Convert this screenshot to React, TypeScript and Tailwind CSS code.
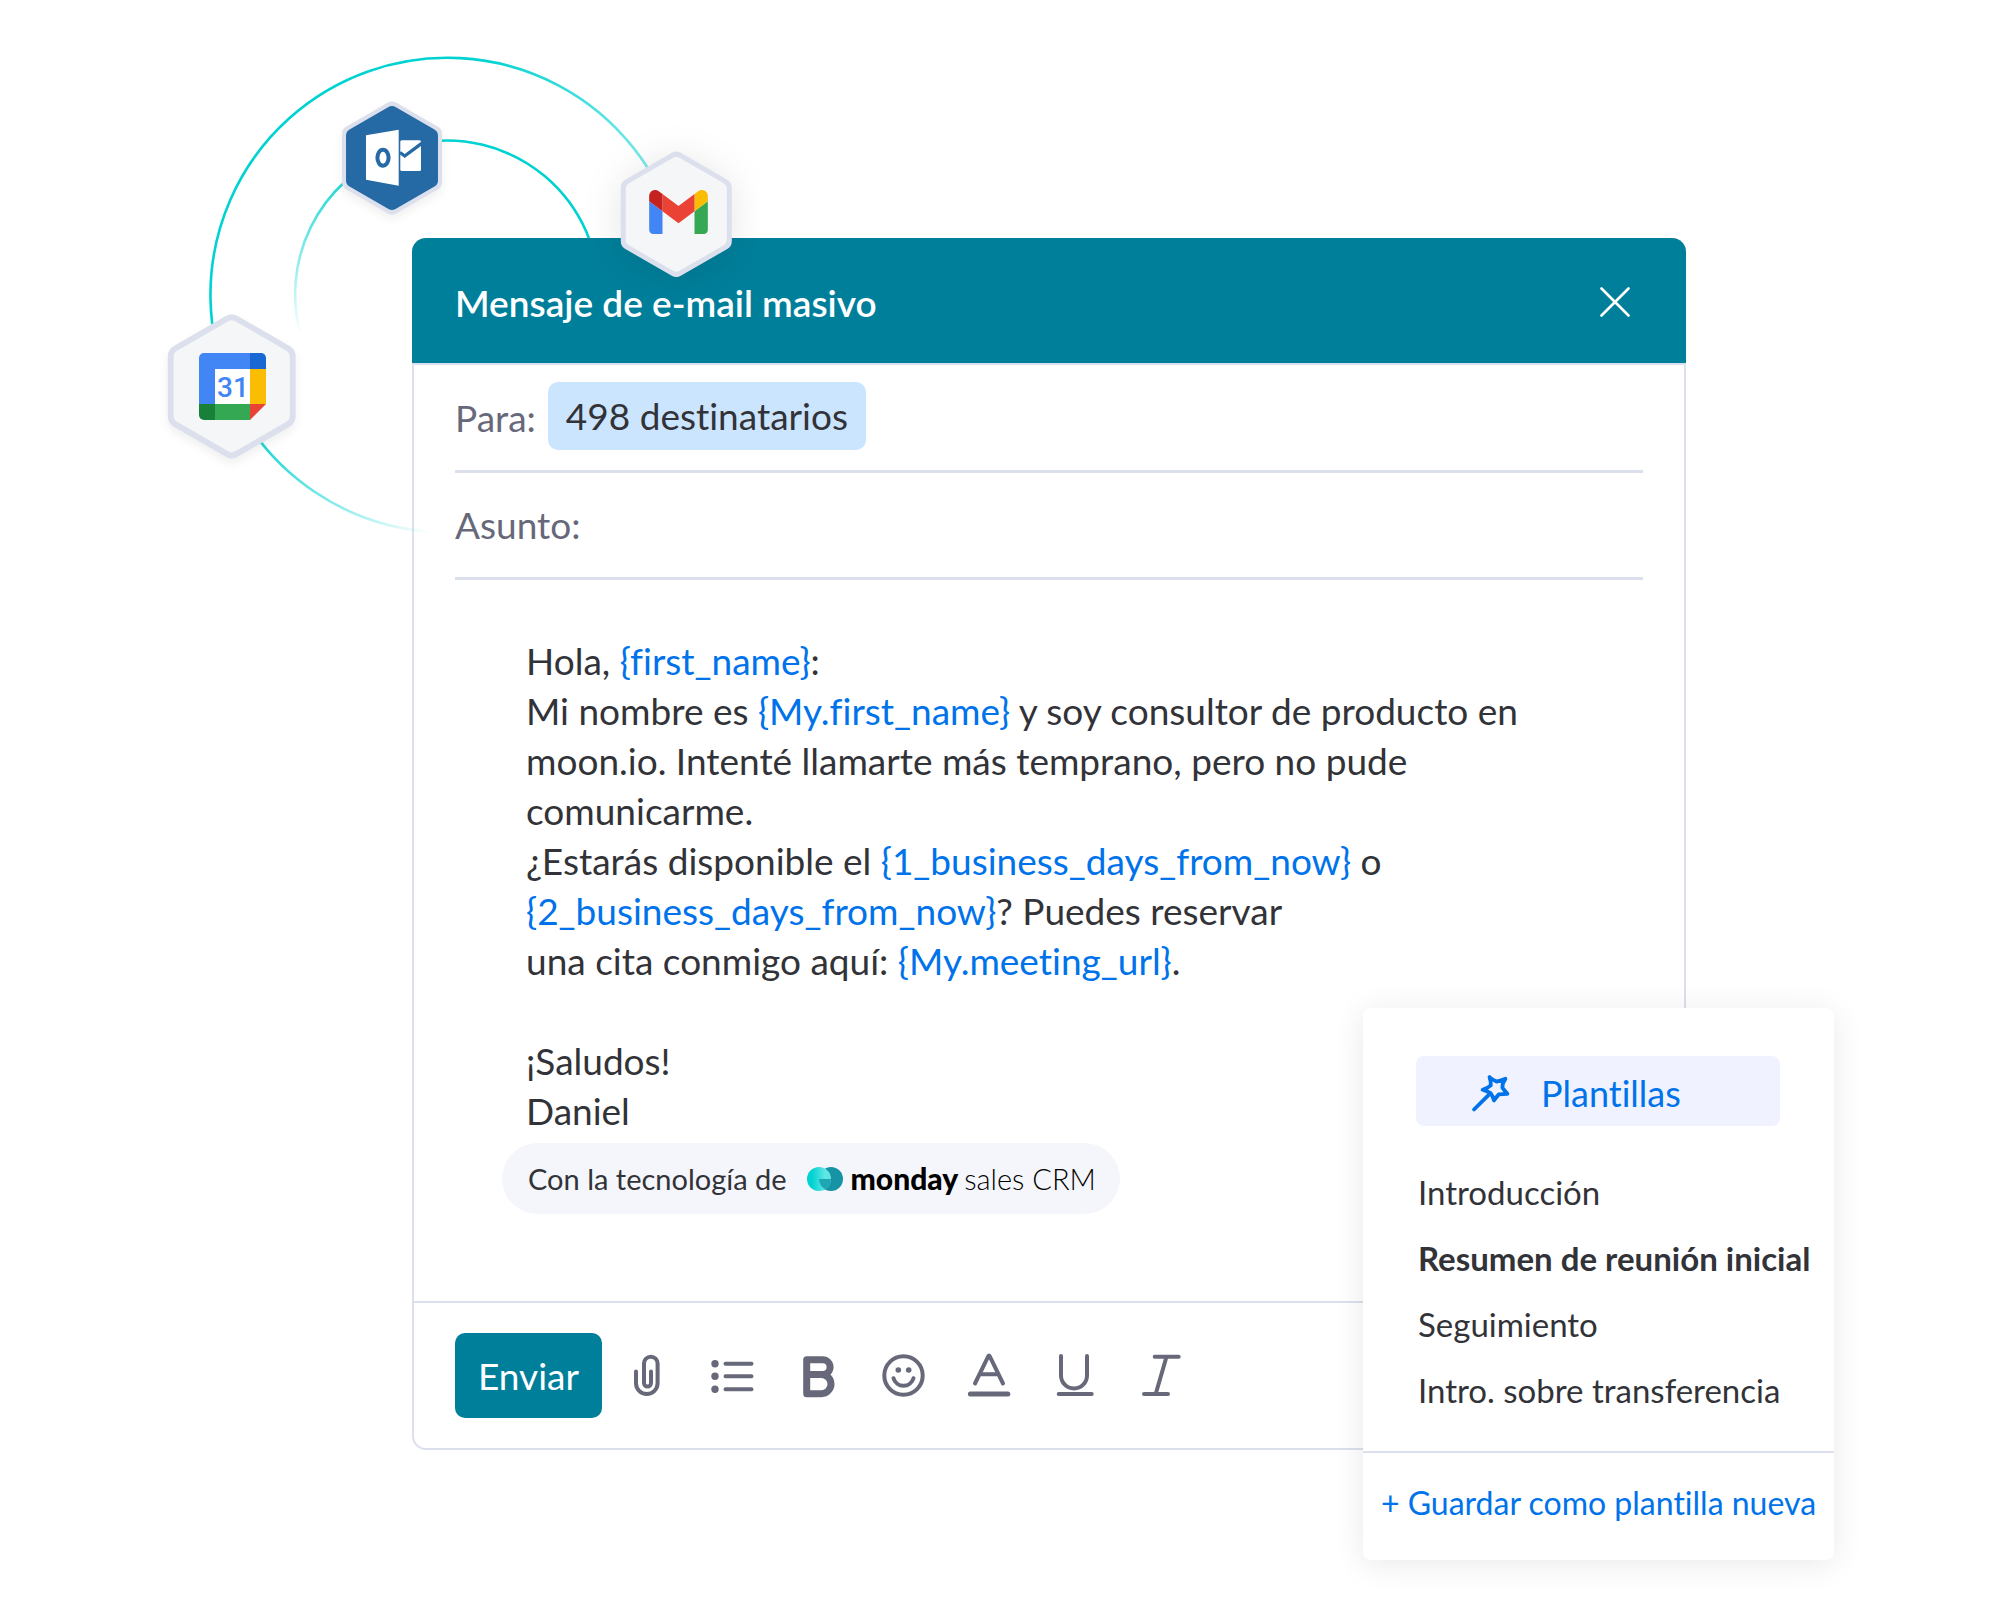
import React from "react";

const Token = ({ children }: { children: React.ReactNode }) => (
  <span className="text-[#0073ea]">{children}</span>
);

function hexPoints(cx: number, cy: number, r: number) {
  const w = r * 0.866;
  return [
    [cx, cy - r],
    [cx + w, cy - r / 2],
    [cx + w, cy + r / 2],
    [cx, cy + r],
    [cx - w, cy + r / 2],
    [cx - w, cy - r / 2],
  ]
    .map((p) => p.join(","))
    .join(" ");
}

type HexProps = {
  cx: number;
  cy: number;
  outer: [number, number];
  inner: [number, number];
  fill: string;
  shadow: string;
};

function Hexagon({ cx, cy, outer, inner, fill, shadow }: HexProps) {
  return (
    <g strokeLinejoin="round">
      <polygon
        className={shadow}
        points={hexPoints(cx, cy, outer[0])}
        fill="#dce0ed"
        stroke="#dce0ed"
        strokeWidth={outer[1] * 2}
      />
      <polygon points={hexPoints(cx, cy, inner[0])} fill={fill} stroke={fill} strokeWidth={inner[1] * 2} />
    </g>
  );
}

function OrbitLines() {
  return (
    <svg className="absolute top-0 left-0" width="760" height="560" viewBox="0 0 760 560" fill="none" aria-hidden="true">
      <defs>
        <linearGradient id="outerFade" gradientUnits="userSpaceOnUse" x1="480" y1="60" x2="670" y2="200">
          <stop offset="0" stopColor="#00d2d2" />
          <stop offset="1" stopColor="#00d2d2" stopOpacity="0.4" />
        </linearGradient>
        <linearGradient id="innerFade" gradientUnits="userSpaceOnUse" x1="0" y1="160" x2="0" y2="335">
          <stop offset="0" stopColor="#00d2d2" />
          <stop offset="1" stopColor="#00d2d2" stopOpacity="0" />
        </linearGradient>
      </defs>
      <path d="M230 389A237 237 0 1 1 676 232" stroke="url(#outerFade)" strokeWidth="2.6" />
      <path d="M301 336A152 152 0 0 1 391 153" stroke="url(#innerFade)" strokeWidth="2.6" />
      <path d="M420 143A152 152 0 0 1 599 293" stroke="#00d2d2" strokeWidth="2.6" />
    </svg>
  );
}

function IntegrationBadges() {
  return (
    <svg className="pointer-events-none absolute top-0 left-0" width="760" height="560" viewBox="0 0 760 560" fill="none" aria-hidden="true">
      <defs>
        <linearGradient id="tailFade" gradientUnits="userSpaceOnUse" x1="240" y1="430" x2="432" y2="530">
          <stop offset="0" stopColor="#00d2d2" />
          <stop offset="1" stopColor="#00d2d2" stopOpacity="0" />
        </linearGradient>
        <clipPath id="calClip">
          <path d="M204 353h57a5 5 0 0 1 5 5v46l-16 16h-46a5 5 0 0 1-5-5v-57a5 5 0 0 1 5-5z" />
        </clipPath>
      </defs>
      <path d="M232 395A237 237 0 0 0 436 532" stroke="url(#tailFade)" strokeWidth="2.6" />

      <Hexagon cx={392} cy={158} outer={[48.5, 8]} inner={[45, 7]} fill="#2569a5" shadow="drop-shadow-[0_5px_4px_rgba(0,0,0,0.06)]" />
      <polygon points="366,135.3 398.7,129.7 398.7,185.7 366,179.7" fill="#fff" />
      <ellipse cx="383" cy="157.7" rx="5.6" ry="8" stroke="#2569a5" strokeWidth="4" />
      <rect x="400.3" y="140.3" width="20.7" height="30.7" rx="1.5" fill="#fff" />
      <path d="M400 152.5l4.7 3.5 17-12.7" stroke="#2569a5" strokeWidth="3.4" />

      <Hexagon cx={676.3} cy={214.3} outer={[53.7, 9]} inner={[52, 5.5]} fill="#f5f6f8" shadow="drop-shadow-[0_4px_18px_rgba(0,0,0,0.1)]" />
      <svg x="649" y="190" width="59" height="44" viewBox="52 42 88 66">
        <path fill="#4285f4" d="M58 108h14V74L52 59v43c0 3.32 2.69 6 6 6" />
        <path fill="#34a853" d="M120 108h14c3.32 0 6-2.69 6-6V59l-20 15" />
        <path fill="#fbbc04" d="M120 48v26l20-15v-8c0-7.42-8.47-11.65-14.4-7.2" />
        <path fill="#ea4335" d="M72 74V48l24 18 24-18v26L96 92" />
        <path fill="#c5221f" d="M52 51v8l20 15V48l-5.6-4.2c-5.94-4.45-14.4-.22-14.4 7.2" />
      </svg>

      <Hexagon cx={231.7} cy={386.3} outer={[60, 12]} inner={[59, 7]} fill="#f5f6f8" shadow="drop-shadow-[0_5px_4px_rgba(0,0,0,0.06)]" />
      <g clipPath="url(#calClip)">
        <rect x="199" y="353" width="51" height="51" fill="#4285f4" />
        <rect x="250" y="353" width="16" height="16" fill="#1967d2" />
        <rect x="250" y="369" width="16" height="35" fill="#fbbc04" />
        <rect x="199" y="404" width="16" height="16" fill="#188038" />
        <rect x="215" y="404" width="35" height="16" fill="#34a853" />
        <rect x="250" y="404" width="16" height="16" fill="#ea4335" />
        <rect x="215" y="369" width="35" height="35" fill="#fff" />
      </g>
      <text x="233" y="397" textAnchor="middle" fontFamily="Roboto, sans-serif" fontSize="28" fontWeight="500" fill="#4285f4">
        31
      </text>
    </svg>
  );
}

const tools: { label: string; icon: React.ReactNode }[] = [
  {
    label: "Adjuntar",
    icon: <path d="M12 17.5V29.2a10.8 10.8 0 0 0 21.6 0V9.5a6.8 6.8 0 0 0-13.6 0V29a3.5 3.5 0 0 0 7 0V17.5" />,
  },
  {
    label: "Lista",
    icon: (
      <>
        <path d="M15.5 9.7h26M15.5 22.3h26M15.5 35.3h26" />
        <g fill="currentColor" stroke="none">
          <circle cx="5" cy="9.7" r="3.7" />
          <circle cx="5" cy="22.3" r="3.7" />
          <circle cx="5" cy="35.3" r="3.7" />
        </g>
      </>
    ),
  },
  {
    label: "Negrita",
    icon: (
      <path strokeWidth="7" d="M10.7 5.7h16a7.4 7.4 0 0 1 0 14.8h-16zM10.7 20.5h14.7a9.6 9.6 0 0 1 0 19.2H10.7z" />
    ),
  },
  {
    label: "Emoji",
    icon: (
      <>
        <circle cx="21.5" cy="21.5" r="19.2" />
        <path d="M11.5 24.2a10.4 10.4 0 0 0 20 0" />
        <g fill="currentColor" stroke="none">
          <circle cx="16.3" cy="16" r="2.8" />
          <circle cx="26.7" cy="16" r="2.8" />
        </g>
      </>
    ),
  },
  {
    label: "Color de texto",
    icon: (
      <>
        <path d="M7 29.5L20.2 2.4q.8-1.6 1.6 0L35 29.5M12 20.2h18" />
        <path strokeWidth="5" d="M2.4 40h37.4" />
      </>
    ),
  },
  {
    label: "Subrayado",
    icon: <path d="M7 2v19.5a13 13 0 0 0 26 0V2M4.7 40h33" />,
  },
  {
    label: "Cursiva",
    icon: <path d="M14.7 2.7h24M4 40h24M26.5 2.7L15.7 40" />,
  },
];

const templates = [
  { name: "Introducción", active: false },
  { name: "Resumen de reunión inicial", active: true },
  { name: "Seguimiento", active: false },
  { name: "Intro. sobre transferencia", active: false },
];

function MondayMark() {
  return (
    <svg width="36" height="24" viewBox="0 0 36 24" aria-hidden="true">
      <defs>
        <linearGradient id="markFade" x1="0" y1="0" x2="1" y2="0">
          <stop offset="0.2" stopColor="#00d2d2" />
          <stop offset="0.75" stopColor="#5fe6e4" />
        </linearGradient>
      </defs>
      <circle cx="24" cy="12" r="12" fill="#1793a6" />
      <circle cx="12" cy="12" r="12" fill="url(#markFade)" />
      <path d="M24 12H12.2A12 12 0 0 0 18 22.4A12 12 0 0 0 24 12z" fill="#1ea6b3" />
    </svg>
  );
}

function TemplatesPanel() {
  return (
    <aside className="absolute -right-[150px] -bottom-28 w-[471px] rounded-lg bg-white pt-12 shadow-[0_4px_32px_rgba(0,0,0,0.09)]">
      <button className="ml-[53px] flex h-[70px] w-[364px] items-center rounded-lg bg-[#f0f2ff] pt-1 pl-[54px] text-[36px] text-[#0073ea]">
        <svg width="42" height="40" viewBox="0 0 42 40" fill="none" stroke="currentColor" strokeWidth="3.8" strokeLinecap="round" strokeLinejoin="round" aria-hidden="true">
          <path d="M19.5 4Q23 7.4 26.7 8.6Q31 7.4 35.4 5.8Q32 10.5 32.4 14.6Q34.4 17.5 37.4 20.8Q33 21 28.8 21.4Q26.4 24 24 27.4Q23.2 23.5 20.4 20Q17 18.2 12.6 16.8Q17.3 15.5 20.8 12.4Q21 8.5 19.5 4z" />
          <path d="M4 36.5L20 20.6" />
        </svg>
        <span className="ml-[29px]">Plantillas</span>
      </button>
      <ul className="mt-[33px] ml-[55px] text-[33px] leading-[66px] text-[#323338]">
        {templates.map((t) => (
          <li key={t.name}>
            <button className={t.active ? "block font-bold whitespace-nowrap" : "block whitespace-nowrap"}>{t.name}</button>
          </li>
        ))}
      </ul>
      <div className="mt-7 border-t-2 border-[#dce0ed]">
        <button className="block h-[107px] w-full pb-2 text-center text-[32px] whitespace-nowrap text-[#0073ea]">
          + Guardar como plantilla nueva
        </button>
      </div>
    </aside>
  );
}

export default function App() {
  return (
    <main className="relative min-h-screen overflow-hidden bg-white pt-[238px] pr-[314px] pb-[152px] pl-[412px] font-['Lato',sans-serif] text-[37px] text-[#323338] [font-variant-ligatures:none]">
      <OrbitLines />
      <section className="relative rounded-[14px] border-2 border-t-0 border-[#dce0ed] bg-white">
        <header className="-mx-0.5 flex h-[125px] items-center justify-between rounded-t-[14px] bg-[#007f9b] pt-1 pr-[56px] pl-[43px] text-white">
          <h1 className="font-semibold">Mensaje de e-mail masivo</h1>
          <button className="mb-0.5" aria-label="Cerrar">
            <svg width="30" height="30" viewBox="0 0 30 30" fill="none" stroke="currentColor" strokeWidth="2.6" strokeLinecap="round" aria-hidden="true">
              <path d="M1.5 1.5l27 27M28.5 1.5l-27 27" />
            </svg>
          </button>
        </header>
        <div className="-mx-0.5 h-0.5 bg-[#dce0ed]" />

        <div className="mr-[41px] ml-[41px]">
          <div className="flex h-[108px] items-center gap-3 border-b-3 border-[#dce0ed] text-[#676879]">
            <span>Para:</span>
            <span className="mb-1 flex h-[68px] items-center rounded-[10px] bg-[#cce5ff] px-[18px] text-[#323338]">498 destinatarios</span>
          </div>
          <div className="flex h-[107px] items-center gap-4 border-b-3 border-[#dce0ed] text-[#676879]">
            <label htmlFor="subject">Asunto:</label>
            <input id="subject" className="min-w-0 flex-1 bg-transparent outline-none" />
          </div>
        </div>

        <article className="mt-[56px] ml-[112px] leading-[50px]">
          <p>
            Hola, <Token>{"{first_name}"}</Token>:
          </p>
          <p>
            Mi nombre es <Token>{"{My.first_name}"}</Token> y soy consultor de producto en
            <br />
            moon.io. Intenté llamarte más temprano, pero no pude
            <br />
            comunicarme.
          </p>
          <p>
            ¿Estarás disponible el <Token>{"{1_business_days_from_now}"}</Token> o
            <br />
            <Token>{"{2_business_days_from_now}"}</Token>? Puedes reservar
            <br />
            una cita conmigo aquí: <Token>{"{My.meeting_url}"}</Token>.
          </p>
          <p className="mt-[50px]">
            ¡Saludos!
            <br />
            Daniel
          </p>
        </article>

        <div className="mt-[7px] ml-[88px] flex h-[71px] w-fit items-center rounded-full bg-[#f5f6fb] pr-6 pl-[26px] text-[29px] whitespace-nowrap">
          <span>Con la tecnología de</span>
          <span className="mr-2 ml-5">
            <MondayMark />
          </span>
          <span className="text-[30px] font-black text-black">monday</span>
          <span className="ml-1.5 font-light text-black">sales CRM</span>
        </div>

        <footer className="mt-[87px] flex h-[147px] items-center border-t-2 border-[#dce0ed] pl-[41px]">
          <button className="h-[85px] rounded-[10px] bg-[#007f9b] px-[23px] text-white">Enviar</button>
          <div className="ml-[22px] flex gap-[42px] text-[#676879]">
            {tools.map((t) => (
              <button key={t.label} aria-label={t.label} className="size-11">
                <svg className="overflow-visible" width="44" height="44" viewBox="0 0 44 44" fill="none" stroke="currentColor" strokeWidth="4" strokeLinecap="round" strokeLinejoin="round" aria-hidden="true">
                  {t.icon}
                </svg>
              </button>
            ))}
          </div>
        </footer>
        <TemplatesPanel />
      </section>
      <IntegrationBadges />
    </main>
  );
}
